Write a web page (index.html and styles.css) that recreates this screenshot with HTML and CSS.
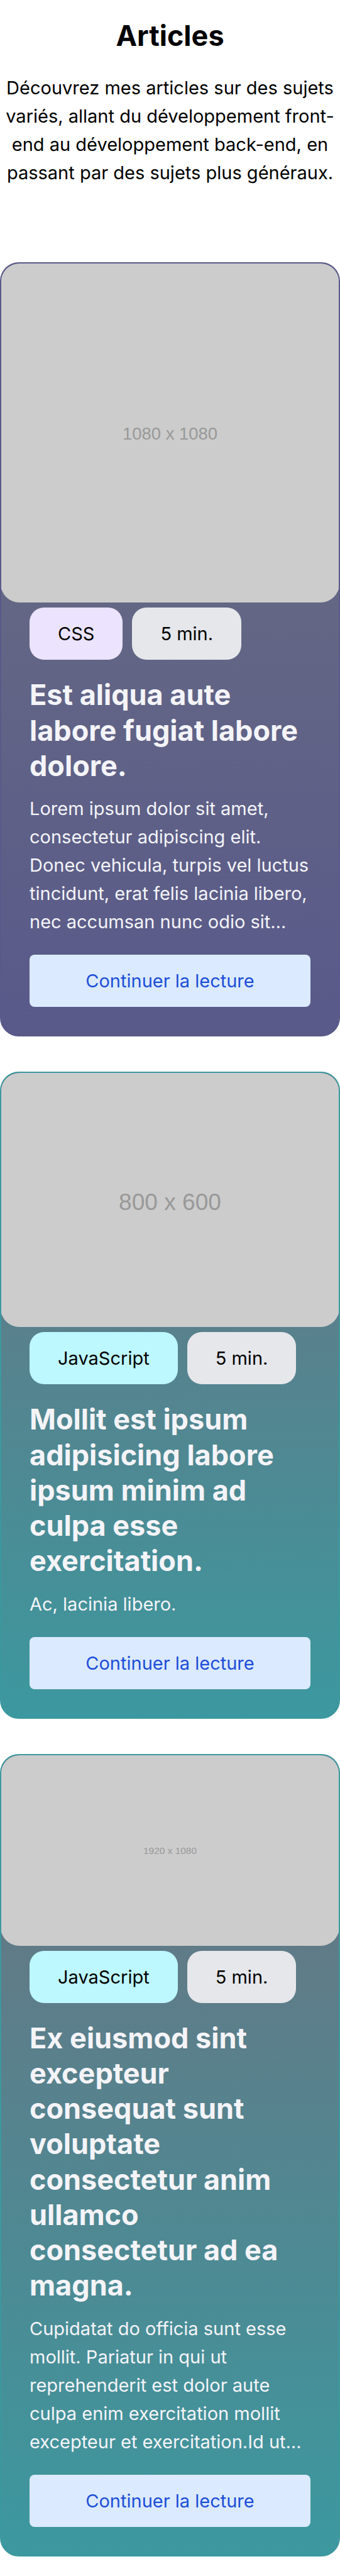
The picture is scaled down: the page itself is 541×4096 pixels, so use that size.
FILE: index.html
```html
<!DOCTYPE html>
<html lang="fr">
<head>
<meta charset="utf-8">
<meta name="viewport" content="width=device-width, initial-scale=1">
<title>Articles</title>
<link rel="stylesheet" href="styles.css">
</head>
<body>
<main class="page">
  <header class="intro">
    <h1 class="intro-title">Articles</h1>
    <p class="intro-text">Découvrez mes articles sur des sujets variés, allant du développement front-end au développement back-end, en passant par des sujets plus généraux.</p>
  </header>

  <section class="articles">
    <article class="card card-css">
      <svg class="cover" viewBox="0 0 1080 1080" role="img" aria-label="1080 x 1080">
        <rect class="cover-bg" width="1080" height="1080"/>
        <text class="cover-label" x="540" y="562">1080 x 1080</text>
      </svg>
      <div class="card-body">
        <div class="tags">
          <span class="tag tag-css">CSS</span>
          <span class="tag">5 min.</span>
        </div>
        <h2 class="card-title">Est aliqua aute labore fugiat labore dolore.</h2>
        <p class="excerpt">Lorem ipsum dolor sit amet, consectetur adipiscing elit. Donec vehicula, turpis vel luctus tincidunt, erat felis lacinia libero, nec accumsan nunc odio sit…</p>
        <a class="read-more" href="#">Continuer la lecture</a>
      </div>
    </article>

    <article class="card card-js">
      <svg class="cover" viewBox="0 0 800 600" role="img" aria-label="800 x 600">
        <rect class="cover-bg" width="800" height="600"/>
        <text class="cover-label" x="400" y="323">800 x 600</text>
      </svg>
      <div class="card-body">
        <div class="tags">
          <span class="tag tag-js">JavaScript</span>
          <span class="tag">5 min.</span>
        </div>
        <h2 class="card-title">Mollit est ipsum adipisicing labore ipsum minim ad culpa esse exercitation.</h2>
        <p class="excerpt">Ac, lacinia libero.</p>
        <a class="read-more" href="#">Continuer la lecture</a>
      </div>
    </article>

    <article class="card card-js">
      <svg class="cover" viewBox="0 0 1920 1080" role="img" aria-label="1920 x 1080">
        <rect class="cover-bg" width="1920" height="1080"/>
        <text class="cover-label" x="960" y="561">1920 x 1080</text>
      </svg>
      <div class="card-body">
        <div class="tags">
          <span class="tag tag-js">JavaScript</span>
          <span class="tag">5 min.</span>
        </div>
        <h2 class="card-title">Ex eiusmod sint excepteur consequat sunt voluptate consectetur anim ullamco consectetur ad ea magna.</h2>
        <p class="excerpt">Cupidatat do officia sunt esse mollit. Pariatur in qui ut reprehenderit est dolor aute culpa enim exercitation mollit excepteur et exercitation.Id ut…</p>
        <a class="read-more" href="#">Continuer la lecture</a>
      </div>
    </article>
  </section>
</main>
</body>
</html>
```
FILE: styles.css
```css
* {
  box-sizing: border-box;
}

body {
  margin: 0;
  background: #fff;
  color: #000;
  font-family: Inter, "Liberation Sans", sans-serif;
  font-size: 29px;
  line-height: 45px;
}

h1,
h2,
p {
  margin: 0;
}

.page {
  display: flex;
  flex-direction: column;
  gap: 120px;
  padding: 29px 0 32px;
}

.intro {
  display: flex;
  flex-direction: column;
  gap: 32px;
  text-align: center;
}

.intro-title,
.card-title {
  font-size: 45px;
  font-weight: 700;
  line-height: 1.25;
}

.articles {
  display: flex;
  flex-direction: column;
  gap: 56px;
}

.card {
  --accent: #59598a;
  overflow: hidden;
  border: 2px solid var(--accent);
  border-radius: 30px;
  background: linear-gradient(#6b7280, var(--accent));
  color: #f4f4f8;
}

.card-js {
  --accent: #3c989f;
}

/* The cover bleeds under the card's side borders. */
.cover {
  display: block;
  width: calc(100% + 2px);
  margin: 0 -1px;
  border-radius: 30px;
}

.cover-bg {
  fill: #ccc;
}

.cover-label {
  fill: #999;
  font-family: "Liberation Sans", Arial, sans-serif;
  font-size: 55px;
  text-anchor: middle;
}

.card-body {
  display: flex;
  flex-direction: column;
  padding: 8px 45px 45px;
}

.tags {
  display: flex;
  flex-wrap: wrap;
  gap: 15px;
}

.tag {
  padding: 19px 45px;
  border-radius: 23px;
  background: #e5e7eb;
  color: #000;
}

.tag-css {
  background: #ece3ff;
}

.tag-js {
  background: #bdf7ff;
}

.card-title {
  margin-top: 28px;
}

.excerpt {
  margin-top: 17px;
}

.read-more {
  margin-top: 30px;
  padding: 19px;
  border-radius: 8px;
  background: #dbeafe;
  color: #1d4ed8;
  text-align: center;
  text-decoration: none;
}
```
